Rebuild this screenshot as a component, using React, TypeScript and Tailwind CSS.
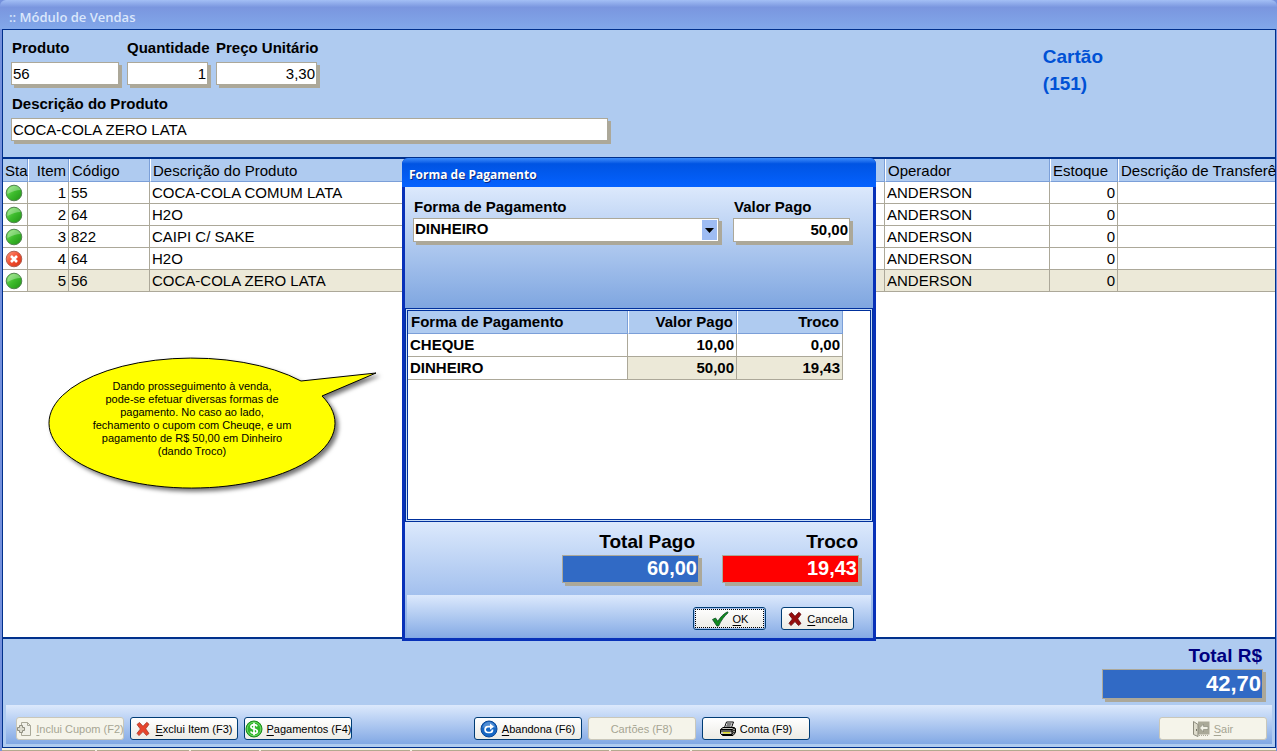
import React from "react";
import clsx from "clsx";

type Status = "ok" | "cancelled";

const items: { status: Status; item: number; code: string; name: string }[] = [
  { status: "ok", item: 1, code: "55", name: "COCA-COLA COMUM LATA" },
  { status: "ok", item: 2, code: "64", name: "H2O" },
  { status: "ok", item: 3, code: "822", name: "CAIPI C/ SAKE" },
  { status: "cancelled", item: 4, code: "64", name: "H2O" },
  { status: "ok", item: 5, code: "56", name: "COCA-COLA ZERO LATA" },
];

const payments = [
  { method: "CHEQUE", paid: "10,00", change: "0,00" },
  { method: "DINHEIRO", paid: "50,00", change: "19,43" },
];

const field =
  "block border border-[#aca899] shadow-[3px_3px_0_#aca899] rounded-none outline-none px-px";

function StatusIcon({ status }: { status: Status }) {
  return (
    <svg viewBox="0 0 18 18" className="ml-[2px] size-[18px]">
      <defs>
        <linearGradient id="green" x1="0" y1="0" x2="1" y2="1">
          <stop offset="0" stopColor="#8be86f" />
          <stop offset="0.5" stopColor="#3dbb2c" />
          <stop offset="1" stopColor="#209315" />
        </linearGradient>
        <linearGradient id="red" x1="0" y1="0" x2="1" y2="1">
          <stop offset="0" stopColor="#ff9a80" />
          <stop offset="0.5" stopColor="#f25032" />
          <stop offset="1" stopColor="#d8300f" />
        </linearGradient>
      </defs>
      <circle
        cx="9"
        cy="9"
        r="7.8"
        fill={status === "ok" ? "url(#green)" : "url(#red)"}
        stroke={status === "ok" ? "#4d7a4b" : "#a85a4c"}
        strokeWidth="0.9"
      />
      {status === "ok" ? (
        <path d="M2.5 10C2 4.500 6 2 9.500 2c3 0 5 1.500 6 4-4 .3-8 1-13 4z" fill="#fff" opacity="0.3" />
      ) : (
        <path d="M6 6l6 6M12 6l-6 6" stroke="#fff" strokeWidth="2.600" />
      )}
    </svg>
  );
}

function AddDocIcon() {
  return (
    <svg viewBox="0 0 16 16" className="size-4 shrink-0" fill="none" stroke="#a9a898">
      <path d="M5.500 4V1.500h6l3 3v10h-9V12" fill="#f0f0e8" />
      <path d="M11.500 1.500v3h3" />
      <path d="M3.500 4.500h3v2h2v3h-2v2h-3v-2h-2v-3h2z" fill="#dddccf" stroke="#8f8e80" />
    </svg>
  );
}

function CrossIcon({ dark }: { dark?: boolean }) {
  return (
    <svg viewBox="0 0 16 16" className="size-4 shrink-0">
      <path
        d="M2 3.500L4.500 1.500 8 5.300 11.800 1.300 14 3.300 10.700 7.800 14 12.500 11.500 14.500 8 10.600 4 14.600 2 12.300 5.400 8z"
        fill={dark ? "#960c0c" : "#e8452c"}
        stroke={dark ? "#5f0808" : "#a63a2a"}
        strokeWidth="0.8"
      />
    </svg>
  );
}

function CheckIcon() {
  return (
    <svg viewBox="0 0 18 16" className="h-4 w-[18px] shrink-0">
      <path
        d="M1.500 8.500L4.500 7l2.300 3.300C9.500 6 12.500 2.800 16.500 .8l.6 1C13 5.500 10 9.500 7.600 15H5.800z"
        fill="#128a1c"
        stroke="#0c4c2c"
        strokeWidth="0.8"
      />
    </svg>
  );
}

function DollarIcon() {
  return (
    <svg viewBox="0 0 18 18" className="size-[18px] shrink-0">
      <circle cx="9" cy="9" r="8" fill="#2fb52b" stroke="#1a8a1c" />
      <circle cx="9" cy="9" r="6.800" fill="none" stroke="#7de070" strokeWidth="0.800" />
      <path
        d="M12.200 6.300C11.600 5.100 10.500 4.700 9 4.700c-1.900 0-3.100.8-3.100 2.100 0 3 6.400 1.400 6.400 4.400 0 1.400-1.400 2.200-3.200 2.200-1.700 0-3-.6-3.500-1.900M9 2.800v12.400"
        fill="none"
        stroke="#fff"
        strokeWidth="1.700"
      />
    </svg>
  );
}

function RedoIcon() {
  return (
    <svg viewBox="0 0 18 18" className="size-[18px] shrink-0">
      <circle cx="9" cy="9" r="8" fill="#1667c4" stroke="#0b4796" />
      <path d="M2.500 8C3 4 6 2 9 2s6 2 6.500 6c-4-2-9-2-13 0z" fill="#fff" opacity="0.25" />
      <path
        d="M12.500 9.500c0 2-1 3-2.500 3H8a2.900 2.900 0 010-5.800h2.800"
        fill="none"
        stroke="#fff"
        strokeWidth="1.700"
      />
      <path d="M10 3.600l4 3.100-4 3.100z" fill="#fff" />
    </svg>
  );
}

function PrinterIcon() {
  return (
    <svg viewBox="0 0 17 16" className="h-4 w-[17px] shrink-0" stroke="#000" strokeWidth="1">
      <path d="M5.500 6.500l2-5.500h7l-2 5.500z" fill="#fff" />
      <path d="M8 3h4.500M7.200 5h4.500" />
      <path d="M1.500 8.500l2.500-2h11l1.500 1v4l-2.500 3H3.500l-2-2z" fill="#c9c8c0" />
      <path d="M1.500 8.500h11.500v5.500M13 8.500l3-1.500M13 10.500l3-1.500M13 12.500l3-1.500" fill="none" />
      <path d="M2 10h11M3 13.500h10" strokeWidth="1.200" />
      <path d="M4 11.800h7" stroke="#e4e000" strokeWidth="1.200" />
    </svg>
  );
}

function DoorIcon() {
  return (
    <svg viewBox="0 0 17 16" className="h-4 w-[17px] shrink-0">
      <path d="M5 .5h11.500v13H5z" fill="#aaa998" />
      <path d="M.5 .5l4.500 3v12l-4.500-2z" fill="#dedccc" stroke="#8d8c7e" />
      <path d="M3.500 8v2" stroke="#777668" />
      <path d="M6.500 7l4-4v2.500h4.500v3h-4.500V11z" fill="#f2f1e6" stroke="#8d8c7e" strokeWidth="0.700" />
      <path d="M6 14.500h10" stroke="#aaa998" strokeDasharray="1 1" />
    </svg>
  );
}

function XpButton({
  icon,
  label,
  hotkey,
  disabled,
  focused,
  small,
}: {
  icon?: React.ReactNode;
  label: string;
  hotkey?: boolean;
  disabled?: boolean;
  focused?: boolean;
  small?: boolean;
}) {
  return (
    <button
      type="button"
      disabled={disabled}
      className={clsx(
        "relative flex h-[23px] shrink-0 items-center justify-center gap-1 whitespace-nowrap rounded-[3px] border text-[11px] leading-4",
        small ? "w-[73px]" : "w-[108px]",
        disabled
          ? "border-[#c9c7ba] bg-[#f5f4ea] text-[#a6a593]"
          : "border-[#003c74] bg-linear-to-b from-white to-[#ecebe5] text-black",
        focused && "shadow-[inset_0_0_0_1px_#a4c0ee]"
      )}
    >
      {icon}
      <span>
        {hotkey ? (
          <>
            <u className="underline-offset-2">{label[0]}</u>
            {label.slice(1)}
          </>
        ) : (
          label
        )}
      </span>
      {focused && <span className="absolute inset-px border border-dotted border-black" />}
    </button>
  );
}

function PaymentDialog() {
  const th = "h-[23px] border-b border-b-[#7b9fd8] bg-[#afcbf0] px-[3px] font-bold";
  const td = "h-[23px] border-b border-r border-[#aca899] px-[2px]";

  return (
    <div
      role="dialog"
      aria-labelledby="dialog-title"
      className="absolute -top-px left-1/2 z-10 w-[474px] -translate-x-1/2 rounded-t-[6px] border-x-[3px] border-b-[3px] border-[#0831b8] bg-[#0054e3] text-[15px] font-bold leading-[18px]"
    >
      <h2
        id="dialog-title"
        className="-mx-[3px] h-[29px] rounded-t-[6px] bg-linear-to-b from-[#3c8cfa] via-[#0054e3] via-20% to-[#0562ff] pl-[7px] pt-[7px] font-['Open_Sans',sans-serif] text-xs font-bold leading-5 text-white [text-shadow:1px_1px_0_#0a2a80]"
      >
        Forma de Pagamento
      </h2>

      <div className="flex h-[121px] gap-[14px] bg-linear-to-b from-[#dce9fc] to-[#7fa6e0] px-2 pt-[11px]">
        <div className="w-[306px]">
          <label htmlFor="method" className="block px-px">
            Forma de Pagamento
          </label>
          <div className="relative mt-[2px]">
            <select id="method" className={clsx(field, "h-6 w-full appearance-none bg-white pb-[2px]")}>
              <option>DINHEIRO</option>
              <option>CHEQUE</option>
            </select>
            <span className="pointer-events-none absolute right-[2px] top-[2px] flex h-5 w-[15px] items-center justify-center bg-[#9ebcf3]">
              <svg viewBox="0 0 9 5" className="h-[5px] w-[9px]">
                <path d="M0 0h9L4.500 5z" />
              </svg>
            </span>
          </div>
        </div>
        <div className="w-[117px]">
          <label htmlFor="paid" className="block px-px">
            Valor Pago
          </label>
          <input
            id="paid"
            defaultValue="50,00"
            className={clsx(field, "mt-[2px] h-6 w-full bg-white pb-[2px] text-right")}
          />
        </div>
      </div>

      <div className="border border-[#00309c] bg-[#c5dbf7] p-px">
        <div className="h-[210px] border border-[#00309c] bg-white">
          <table className="table-fixed border-separate border-spacing-0 text-right">
            <colgroup>
              <col className="w-[220px]" />
              <col className="w-[109px]" />
              <col className="w-[106px]" />
            </colgroup>
            <thead>
              <tr>
                <th className={clsx(th, "border-r border-r-[#7b9fd8] text-left")}>Forma de Pagamento</th>
                <th className={clsx(th, "border-l border-r border-l-white border-r-[#7b9fd8]")}>Valor Pago</th>
                <th className={clsx(th, "border-l border-r border-l-white border-r-[#7b9fd8]")}>Troco</th>
              </tr>
            </thead>
            <tbody>
              {payments.map((p, i) => (
                <tr key={p.method}>
                  <td className={clsx(td, "text-left")}>{p.method}</td>
                  <td className={clsx(td, i === 1 && "bg-[#ece9d8]")}>{p.paid}</td>
                  <td className={clsx(td, i === 1 && "bg-[#ece9d8]")}>{p.change}</td>
                </tr>
              ))}
            </tbody>
          </table>
        </div>
      </div>

      <div className="bg-linear-to-b from-[#dce9fc] to-[#82a8e4] px-[2px] pb-px">
        <div className="flex h-[73px] justify-end gap-[23px] pr-3 pt-2 text-right">
          <div className="w-[137px]">
            <label htmlFor="total-paid" className="block px-1 text-[19px] leading-6">
              Total Pago
            </label>
            <input
              id="total-paid"
              readOnly
              value="60,00"
              className={clsx(field, "mt-px h-7 w-full bg-[#316ac5] pb-[2px] text-right text-xl text-white")}
            />
          </div>
          <div className="w-[137px]">
            <label htmlFor="change" className="block px-px text-[19px] leading-6">
              Troco
            </label>
            <input
              id="change"
              readOnly
              value="19,43"
              className={clsx(field, "mt-px h-7 w-full bg-[#ff0000] pb-[2px] text-right text-xl text-white")}
            />
          </div>
        </div>
        <div className="flex h-[42px] justify-end gap-[15px] bg-linear-to-b from-[#dce9fc] to-[#86abe5] pr-[17px] pt-3 font-normal">
          <XpButton small focused hotkey icon={<CheckIcon />} label="OK" />
          <XpButton small hotkey icon={<CrossIcon dark />} label="Cancela" />
        </div>
      </div>
    </div>
  );
}

function Balloon() {
  return (
    <div className="absolute left-[45px] top-[197px] h-[140px] w-[336px]">
      <svg viewBox="0 0 336 140" className="h-full w-full overflow-visible drop-shadow-[3px_3px_2px_rgba(0,0,0,0.55)]">
        <path
          d="M253 25L328 17 274 40A143 65 0 1 1 253 25z"
          fill="#ffff00"
          stroke="#000"
          strokeWidth="1"
        />
      </svg>
      <p className="absolute left-0 top-6 w-[288px] whitespace-nowrap text-center text-[11px] leading-[13px]">
        Dando prosseguimento à venda,
        <br />
        pode-se efetuar diversas formas de
        <br />
        pagamento. No caso ao lado,
        <br />
        fechamento o cupom com Cheuqe, e um
        <br />
        pagamento de R$ 50,00 em Dinheiro
        <br />
        (dando Troco)
      </p>
    </div>
  );
}

function ItemsTable() {
  const th =
    "h-[23px] whitespace-nowrap border-b border-b-[#7b9fd8] bg-[#afcbf0] px-[2px] pt-px text-left font-normal";
  const edge = "border-r border-r-[#7b9fd8]";
  const td = "h-[22px] border-b border-r border-[#aca899] px-[2px]";

  return (
    <table className="w-full table-fixed border-separate border-spacing-0 text-[15px] leading-[18px]">
      <colgroup>
        <col className="w-[25px]" />
        <col className="w-[41px]" />
        <col className="w-[81px]" />
        <col />
        <col className="w-[165px]" />
        <col className="w-[68px]" />
        <col className="w-[157px]" />
      </colgroup>
      <thead>
        <tr>
          <th className={clsx(th, edge)}>Sta</th>
          <th className={clsx(th, edge, "border-l border-l-white text-right")}>Item</th>
          <th className={clsx(th, edge, "border-l border-l-white")}>Código</th>
          <th className={clsx(th, edge, "border-l border-l-white")}>Descrição do Produto</th>
          <th className={clsx(th, edge, "border-l border-l-white")}>Operador</th>
          <th className={clsx(th, edge, "border-l border-l-white")}>Estoque</th>
          <th className={clsx(th, "border-l border-l-white")}>Descrição de Transferê</th>
        </tr>
      </thead>
      <tbody>
        {items.map((row) => (
          <tr key={row.item} className={row.item === 5 ? "bg-[#ece9d8]" : "bg-white"}>
            <td className="h-[22px] border-b border-r border-[#aca899] bg-white p-0">
              <StatusIcon status={row.status} />
            </td>
            <td className={clsx(td, "text-right")}>{row.item}</td>
            <td className={td}>{row.code}</td>
            <td className={td}>{row.name}</td>
            <td className={td}>ANDERSON</td>
            <td className={clsx(td, "text-right")}>0</td>
            <td className="h-[22px] border-b border-[#aca899]" />
          </tr>
        ))}
      </tbody>
    </table>
  );
}

export default function App() {
  return (
    <div className="flex min-h-screen w-full flex-col overflow-hidden bg-[#7591dd] font-['Liberation_Sans',Arial,sans-serif] text-black">
      <header className="h-[29px] rounded-t-[6px] bg-linear-to-b from-[#a3bff5] via-[#7a96df] via-25% to-[#82a8ea] pl-[9px] pt-[7px]">
        <h1 className="font-['Open_Sans',sans-serif] text-[13px] font-semibold leading-5 text-[#dbe7fb]">
          :: Módulo de Vendas
        </h1>
      </header>

      <main className="ml-[2px] mr-px flex grow flex-col border border-[#00308c] bg-[#afcbf0]">
        <section className="flex h-[127px] justify-between pl-2 pr-[172px] pt-2">
          <div className="text-[15px] leading-[18px]">
            <div className="flex gap-2">
              <div className="w-[108px]">
                <label htmlFor="product" className="block px-px pt-px font-bold">
                  Produto
                </label>
                <input id="product" defaultValue="56" className={clsx(field, "mt-[5px] h-[23px] w-full bg-white")} />
              </div>
              <div className="w-[81px]">
                <label htmlFor="quantity" className="block whitespace-nowrap pt-px font-bold">
                  Quantidade
                </label>
                <input
                  id="quantity"
                  defaultValue="1"
                  className={clsx(field, "mt-[5px] h-[23px] w-full bg-white text-right")}
                />
              </div>
              <div className="w-[101px]">
                <label htmlFor="price" className="block whitespace-nowrap pt-px font-bold">
                  Preço Unitário
                </label>
                <input
                  id="price"
                  defaultValue="3,30"
                  className={clsx(field, "mt-[5px] h-[23px] w-full bg-white text-right")}
                />
              </div>
            </div>
            <label htmlFor="description" className="mt-[10px] block px-px font-bold">
              Descrição do Produto
            </label>
            <input
              id="description"
              defaultValue="COCA-COLA ZERO LATA"
              className={clsx(field, "mt-[5px] h-[23px] w-[597px] bg-white")}
            />
          </div>
          <div className="pt-[5px] text-[19px] font-bold leading-[27px] text-[#0051d5]">
            Cartão
            <br />
            (151)
          </div>
        </section>

        <section className="relative grow border-y-2 border-[#00308c] bg-white">
          <ItemsTable />
          <Balloon />
          <PaymentDialog />
        </section>

        <section className="flex h-[66px] justify-end pr-3 pt-[5px] text-right font-bold">
          <div className="w-[161px]">
            <label htmlFor="total" className="block px-px text-[19px] leading-6 text-[#000080]">
              Total R$
            </label>
            <input
              id="total"
              readOnly
              value="42,70"
              className={clsx(field, "mt-px h-[30px] w-full bg-[#316ac5] pb-[2px] text-right text-[22px] text-white")}
            />
          </div>
        </section>

        <section className="mx-[3px] mb-[3px] grid h-[39px] grid-cols-[1fr_auto_1fr] bg-linear-to-b from-[#dce9fc] to-[#82a8e4] pl-[10px] pr-[5px] pt-3">
          <div className="flex gap-[6px]">
            <XpButton disabled hotkey icon={<AddDocIcon />} label="Inclui Cupom (F2)" />
            <XpButton hotkey icon={<CrossIcon />} label="Exclui Item (F3)" />
            <XpButton hotkey icon={<DollarIcon />} label="Pagamentos (F4)" />
          </div>
          <div className="flex gap-[6px]">
            <XpButton hotkey icon={<RedoIcon />} label="Abandona (F6)" />
            <XpButton disabled label="Cartões (F8)" />
            <XpButton icon={<PrinterIcon />} label="Conta (F9)" />
          </div>
          <div className="flex justify-end">
            <XpButton disabled hotkey icon={<DoorIcon />} label="Sair" />
          </div>
        </section>
      </main>

      <footer className="ml-[2px] mr-px flex h-[3px] gap-[2px] bg-[#f4f1e4] pt-[2px]">
        <span className="w-[93px] bg-[#b3a98f]" />
        <span className="w-[92px] bg-[#b3a98f]" />
        <span className="w-[68px] bg-[#b3a98f]" />
        <span className="w-[149px] bg-[#b3a98f]" />
        <span className="w-[197px] bg-[#b3a98f]" />
        <span className="w-[79px] bg-[#b3a98f]" />
        <span className="grow bg-[#b3a98f]" />
      </footer>
    </div>
  );
}
